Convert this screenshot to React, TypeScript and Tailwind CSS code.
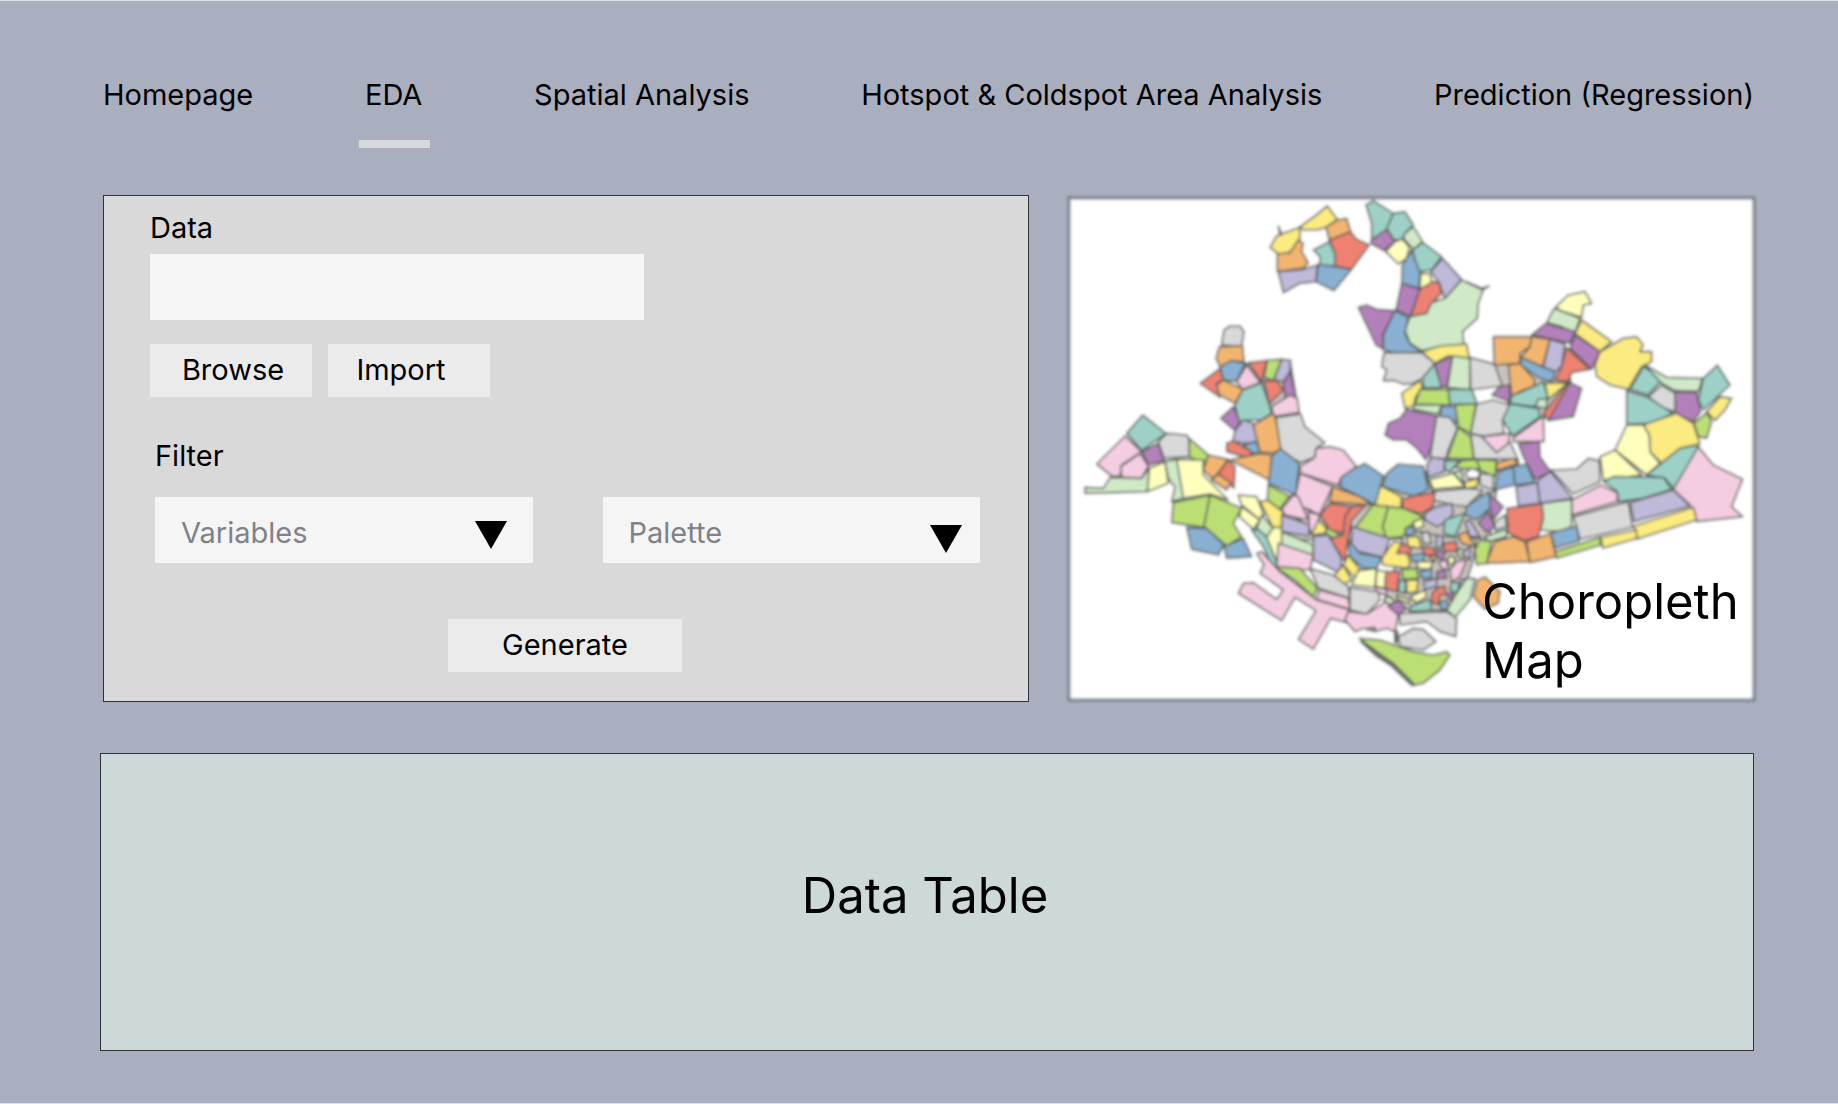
import React from "react";

const colours: Record<string, string> = {
  t: "#9dd1c7",
  l: "#ffffbd",
  v: "#bfb9da",
  r: "#ee8172",
  b: "#89b0d2",
  o: "#f2b56f",
  g: "#bbdf75",
  p: "#f5cde2",
  s: "#d9d9d9",
  u: "#b480bb",
  m: "#d0eac8",
  y: "#fbeb80",
  k: "#777c77",
  x: "#c8c2bd",
  w: "#ffffff",
};

type Sheet = { x: number; y: number; districts: string };

// Each line is a colour key followed by the outline of one district.
const sheets: Sheet[] = [
  {
    x: 1240,
    y: 190,
    districts: `y 180,110 225,78 262,48 292,88 258,112 232,120 190,120
y 90,172 110,138 135,128 180,112 180,145 160,180 135,192 115,192
o 112,192 150,188 175,150 190,160 185,185 205,218 190,235 112,245
v 115,245 190,238 232,225 228,275 180,280 130,308
b 235,222 335,238 282,302 228,275
t 220,180 268,155 285,190 285,228 240,225 240,200
o 258,112 292,90 320,85 332,125 268,150
r 268,150 332,125 350,148 388,165 335,238 285,228 285,190
k 115,108 125,132 120,136
t 378,45 400,32 460,70 440,120 395,150 395,100
u 395,150 440,118 465,155 432,182 392,160
t 460,70 495,65 520,105 495,130 487,148 462,150 440,115
m 520,110 548,155 520,178 490,145 495,130
l 437,185 465,155 487,147 508,172 500,205 475,222
b 500,205 515,180 525,210 540,235 538,295 485,280 487,225
t 548,157 605,200 575,240 540,245 525,210 518,180
v 608,205 665,268 615,328 598,280 572,245
l 542,250 570,252 578,285 555,300 540,295
u 485,280 540,298 512,378 468,360
r 540,298 578,275 598,278 605,310 575,340 560,370 512,380
m 665,270 730,300 715,340 712,385 668,425 672,462 600,470 545,482 510,460 495,420 510,380 560,370 575,338 615,325
u 355,352 380,345 410,358 465,362 428,435 430,478 408,465
b 465,362 505,382 495,430 510,462 545,485 480,492 430,480 430,435
k 680,275 725,295 748,288 728,300
s 432,488 545,488 585,520 548,565 520,580 490,583 465,572 430,572 440,540 425,530
y 545,485 600,468 680,462 688,505 625,498 585,520
u 585,522 638,498 620,590 600,590
t 548,565 583,522 605,592 552,595
m 638,498 690,505 690,600 622,592`,
  },
  {
    x: 1280,
    y: 340,
    districts: `x 62,400 230,385 310,410 440,395 650,450 630,595 20,600 20,500
s 570,52 690,85 690,135 572,150
y 365,160 420,122 428,140 405,175 402,198 375,205
g 420,148 505,148 510,195 405,192
m 402,195 485,195 475,222 400,208
t 505,148 575,148 592,192 510,192
b 485,198 530,200 530,250 480,228
g 525,195 588,192 572,280 535,260
s 590,192 640,180 690,195 668,240 672,280 610,288 572,280
u 380,208 470,228 455,320 438,360 410,325 380,300 340,300 315,285 325,250 360,235
s 470,228 510,232 532,265 505,330 498,358 450,355
g 535,262 572,290 582,360 500,358
s 572,282 612,290 650,335 690,305 715,360 640,365 583,360
p 605,290 690,280 685,310 650,338
s 440,410 450,355 715,358 715,390 650,450 620,465 460,460
v 440,375 455,352 495,358 492,395 445,412
t 495,362 540,362 510,395 495,390
g 545,362 590,358 600,388 540,385 525,380
g 590,358 650,362 645,410 600,390
o 650,370 700,355 715,370 650,392
b 655,395 700,380 705,435 645,450
b 700,380 740,372 765,428 705,435
l 448,420 520,400 555,440 460,447
m 520,398 545,392 550,430
w 555,400 575,385 600,395 595,415 565,415
y 555,425 595,415 590,440 555,448
s 600,400 640,405 640,450 600,435
s 455,455 560,445 610,450 560,500 520,495 460,480
b 320,400 355,372 430,378 445,450 400,468 308,440
r 365,480 400,468 465,458 458,500 425,522 370,505
y 290,440 308,440 365,470 362,505 285,495
b 185,405 255,370 310,408 285,495 240,470 180,440
s -12,232 62,222 75,260 135,308 108,325 105,352 62,368 0,335
p 60,380 105,352 108,325 150,320 190,330 230,380 185,410 175,435 62,400
b 0,325 58,370 48,460 40,462 -35,430 -25,350
p 60,400 158,440 118,525 80,505 12,510 48,460
p 12,512 78,505 115,530 92,560
o 158,440 240,470 275,495 150,485
g 278,495 325,500 308,560 320,595 225,565
g 325,500 370,505 430,530 385,560 370,590 320,595 308,560
v 435,520 470,500 515,490 520,520 500,545 470,560 435,540
t 555,520 525,590 490,580 495,540
b 560,500 625,455 635,500 590,540 555,525
u 630,465 670,500 640,540 630,500
u 595,550 625,515 645,560 620,578
v 555,545 570,540 600,590 570,590
s 645,545 675,525 680,560 645,572`,
  },
  {
    x: 1480,
    y: 270,
    districts: `x 45,285 120,260 265,300 275,345 200,440 100,490 85,400
l 228,110 265,75 315,65 335,100 310,105 305,142 240,122
m 222,115 300,145 285,190 240,168 200,158
u 155,195 198,160 285,185 270,220 205,205
y 305,150 395,215 360,245 285,190
u 285,195 360,245 335,298 270,235
y 345,285 360,245 430,205 470,200 490,225 480,245 515,245 515,275 485,290 445,358 390,345 350,320
o 40,200 155,200 150,230 120,250 120,280 42,285
o 155,200 210,208 188,290 122,262 150,230
v 210,208 255,222 245,290 225,305 190,290
r 260,232 330,298 275,308 265,335 225,330 245,290
b 122,262 190,292 225,305 215,335 180,325 150,305 122,285
o 85,285 120,280 165,330 160,350 130,360 95,378
u 35,375 60,350 88,345 90,395
t 160,350 190,335 205,385 160,410 90,400 95,378
y 195,340 265,338 205,388
m 165,410 175,388 200,385 200,415
r 265,338 275,350 205,452 190,430
u 270,338 305,355 280,440 205,452
t 90,402 175,415 180,440 98,498 68,450
p 98,505 190,438 192,515 100,515
u 115,522 178,515 180,560 212,605 165,628 130,560
t 490,290 550,325 505,375 450,358
m 495,285 560,322 668,325 655,365 585,362 545,340
t 712,285 750,345 670,420 655,390 670,325
y 755,385 735,420 705,452 680,425 720,380
u 585,365 650,368 662,425 640,455 585,430
s 505,380 545,345 585,370 585,425 550,415
t 440,362 500,380 578,430 520,460 440,462
g 680,428 695,455 680,505 655,500 642,460
y 490,465 590,430 640,460 660,522 600,535 545,580 510,545 508,495
l 440,465 490,465 508,495 510,545 540,580 500,615 405,540
l 360,560 405,540 485,615 370,630
t 500,615 600,535 655,525 630,610 580,655 555,625
t 370,635 400,620 550,622 575,658 490,685 415,695 412,665
p 655,530 700,585 788,628 755,710 788,740 650,755 630,705 580,658
s 212,600 290,597 325,565 358,572 360,635 280,672
v 212,605 278,685 180,700 172,632
v 108,650 172,638 180,700 115,708
p 275,690 362,645 412,668 412,695 275,735
m 185,700 275,688 275,770 240,785 180,780 190,745
s 280,740 445,695 458,772 300,808
v 450,698 580,660 630,708 462,755
y 462,768 640,712 650,750 470,808
y 362,802 468,780 472,805 368,835
g 225,845 360,802 362,825 230,865
b 212,790 290,768 298,812 225,835
r 80,715 185,702 190,745 175,800 135,812 85,790
m 15,800 80,778 80,800 25,815
o 18,880 45,815 100,800 135,815 150,875
o 140,815 212,790 228,860 150,878`,
  },
  {
    x: 1060,
    y: 190,
    districts: `x 555,520 690,510 712,640 715,665 640,680 560,600
s 485,465 492,420 510,408 540,408 552,425 545,470
o 478,470 548,468 552,515 515,515 480,530 468,505
r 420,580 480,535 490,570 470,580 480,622
b 480,530 515,512 555,520 530,575 490,570
o 470,585 490,570 550,598 525,640 478,615
p 530,575 560,525 602,578 548,598
r 565,518 620,512 605,575
g 622,510 665,508 640,572 612,562
v 665,508 692,510 690,545 670,575 642,570
u 690,545 712,635 675,620 670,580
r 612,572 650,572 670,600 628,642
t 548,600 605,578 628,645 635,670 605,690 560,690 540,710 525,645
p 635,650 690,615 712,625 718,668 640,680
v 518,755 525,722 550,690 580,700 595,755 560,760
u 482,685 520,650 540,695 525,722
o 605,690 640,670 648,690 662,775 645,788 600,788 580,705`,
  },
  {
    x: 1060,
    y: 400,
    districts: `t 200,100 248,45 318,100 245,152
p 110,192 195,108 245,155 185,195 180,230 155,228
p 182,200 240,160 265,198 245,235 185,232
u 245,155 295,130 312,182 265,195
s 295,125 320,100 380,105 388,120 388,170 312,175
g 388,115 445,165 435,190 388,172
m 75,262 130,265 150,232 245,235 268,205 262,275 75,280
l 268,205 315,185 325,250 262,275
m 315,185 350,178 372,230 370,295 335,305 345,262 325,235
l 350,178 430,180 430,225 505,300 450,282 370,295
o 430,210 445,165 505,178 470,225 455,235
r 505,180 525,200 522,265 475,220
o 455,240 475,222 512,248 500,270
b 550,135 590,125 600,160 575,160
r 500,130 520,122 575,155 568,175 500,155
o 510,180 600,160 635,165 628,240
g 340,308 450,285 432,382 335,368
g 450,285 545,325 520,370 545,410 500,438 432,380
b 380,382 440,385 492,435 475,465 395,448
b 492,440 550,415 575,470 500,475
l 535,285 590,290 612,345 600,360 545,315
l 545,320 600,360 580,388 538,350
y 600,305 625,300 668,335 672,382 640,385
m 605,345 640,385 625,415 590,385
t 575,390 595,388 622,412 655,500 640,505 610,440
l 640,382 675,382 658,505 620,412
g 625,255 688,288 660,328 622,300
p 665,328 700,285 715,290 745,360 675,345`,
  },
  {
    x: 1280,
    y: 500,
    districts: `v 5,45 90,75 85,108 5,95
m 5,95 100,135 100,165 5,145
p -5,130 100,165 90,210 -10,205
g -15,200 60,205 112,265 100,292 50,245
p -70,160 -55,155 0,215 110,300 210,330 200,368 152,355 100,448 55,418 108,332 45,292 5,362 -125,280 -110,250 -80,248 -10,298 10,270 -60,220 -48,195
p 85,35 118,45 115,65 95,105 88,82
y 115,60 140,85 135,100 95,105
g 140,80 180,105 175,125 138,100
v 100,110 145,105 185,175 180,220 100,180
r 120,45 150,10 215,20 195,50 190,100 150,90
r 215,20 258,15 215,60 205,110 195,185 150,115 190,105 195,50
v 215,80 330,115 310,172 215,150
b 205,120 240,160 305,172 290,205 250,205 210,170
y 205,165 242,210 225,235 190,195
y 160,230 190,195 215,240 190,255
l 235,212 290,205 285,262 215,255
l 290,210 318,215 315,265 287,260
s 90,205 160,225 205,260 210,295 115,265
p 118,270 205,295 210,328 110,298
p 285,260 345,275 340,290 290,278
s 210,262 295,275 300,300 260,342 210,330
p 205,335 260,342 318,305 355,345 345,395 320,385 285,395 250,385 225,395 195,360
x 370,105 420,95 480,108 530,114 590,115 580,180 555,260 510,330 380,330 315,290 345,200
y 305,175 340,125 370,130 390,185 385,205 308,195
r 318,215 358,215 352,275 315,265
r 350,160 365,130 395,145 390,160
g 365,208 410,205 415,235 370,238
t 358,240 378,245 375,280 355,275
y 380,240 415,240 410,275 380,280
l 350,285 390,300 385,310 350,295
l 390,290 435,270 440,290 410,308
m 310,300 325,288 345,305 330,315
u 325,320 355,300 378,325 355,345
t 390,320 450,298 455,330 390,335
b 375,85 400,80 405,100 380,108
l 400,65 430,55 430,80 405,88
s 425,100 445,95 455,130 430,130
y 380,110 415,110 425,145 385,140
v 470,105 490,110 485,145 468,140
r 430,140 465,145 460,165 430,165
r 490,130 530,125 530,155 495,155
o 535,105 560,95 585,140 545,130
m 535,145 558,150 550,175 535,170
v 545,160 570,140 570,180
b 390,165 435,160 430,185 400,185
o 445,170 470,165 465,185
l 410,185 460,185 450,208 415,205
p 475,185 500,180 505,210 485,205
u 470,150 495,155 490,180 470,172
l 505,170 525,170 520,195 505,190
p 510,210 530,185 560,180 540,230 515,245
b 420,215 455,205 455,235 425,235
u 470,215 495,210 500,235 470,235
v 430,245 470,235 470,260 435,268
r 455,280 475,262 495,258 500,285 480,285 475,315 458,310
t 515,245 540,250 530,280 510,270
u 500,285 520,275 515,305
b 480,305 500,300 505,325 485,330
v 540,240 560,235 555,260 540,265
m 500,330 530,280 560,235 585,235 570,300 525,352
g 585,150 600,120 635,125 620,190 590,195
o 580,290 592,240 615,230 660,275 655,310 615,328
s 358,340 500,335 530,355 528,410 480,395 440,365 360,375
s 355,410 400,385 430,388 468,425 430,450 360,440
k 344,390 354,395 350,430 344,425
s 262,385 285,382 285,392 262,390
k 242,425 300,462 350,500 405,556 395,556 330,495 290,470
g 238,415 300,420 400,455 460,465 500,455 510,465 480,510 430,550 405,555 340,490 270,440`,
  },
];

function ChoroplethMap() {
  return (
    <svg
      viewBox="1064 193 696 514"
      preserveAspectRatio="none"
      className="block h-full w-full"
      role="img"
      aria-label="Choropleth map of the harbour districts"
    >
      <defs>
        <filter id="soften" x="-2%" y="-2%" width="104%" height="104%">
          <feGaussianBlur stdDeviation="1.5" />
        </filter>
      </defs>
      <g filter="url(#soften)">
        <rect x="1069" y="198" width="685" height="502" fill="#fff" stroke="#777b88" strokeWidth="3" />
        {sheets.map((sheet, i) => (
          <g
            key={i}
            transform={`translate(${sheet.x} ${sheet.y}) scale(0.3333)`}
            stroke="#555a55"
            strokeWidth="5"
            strokeLinejoin="round"
          >
            {sheet.districts.split("\n").map((line, j) => (
              <polygon key={j} fill={colours[line[0]]} points={line.slice(2)} />
            ))}
          </g>
        ))}
      </g>
    </svg>
  );
}

const links = [
  "Homepage",
  "EDA",
  "Spatial Analysis",
  "Hotspot & Coldspot Area Analysis",
  "Prediction (Regression)",
];

function Picker({ label, arrow }: { label: string; arrow: string }) {
  return (
    <div className="relative min-w-0 flex-1">
      <select
        aria-label={label}
        className="h-[66px] w-full appearance-none bg-[#f5f5f5] px-[26px] pt-1.5 text-[#7f828a]"
      >
        <option>{label}</option>
      </select>
      <svg
        viewBox="0 0 32 28"
        className={`pointer-events-none absolute h-7 w-8 ${arrow}`}
        aria-hidden="true"
      >
        <path d="M0 0H32L16 28Z" fill="#000" />
      </svg>
    </div>
  );
}

const button = "h-[53px] bg-[#ebebeb] pb-0.5 text-center";

export default function App() {
  return (
    <div className="min-h-screen border-y border-[#dcdfe6] bg-[#a9afbf] pr-[84px] pb-[51px] pl-[100px] font-['Inter',sans-serif] text-[29px] leading-9 text-black">
      <nav className="flex justify-between pt-[76px] pl-[3px] whitespace-nowrap">
        {links.map((name) => (
          <a key={name} href="#" aria-current={name === "EDA" ? "page" : undefined} className="relative">
            {name}
            {name === "EDA" && (
              <span className="absolute top-[63px] -right-2 -left-1.5 h-2 bg-[#d9d9d9]" />
            )}
          </a>
        ))}
      </nav>

      <main>
        <div className="mt-[82px] -mr-1.5 grid grid-cols-[minmax(0,926fr)_minmax(0,696fr)] gap-[35px] pl-[3px]">
          <form
            className="flex flex-col border border-[#303238] bg-[#d9d9d9] pt-3.5 pr-12 pb-[29px] pl-[46px]"
            onSubmit={(e) => e.preventDefault()}
          >
            <label htmlFor="data">Data</label>
            <input id="data" type="text" className="mt-2 h-[66px] w-[494px] bg-[#f5f5f5] px-6" />
            <div className="mt-6 flex gap-4">
              <button type="button" className={`${button} w-[162px] pl-1`}>
                Browse
              </button>
              <button type="button" className={`${button} w-[162px] pr-4`}>
                Import
              </button>
            </div>
            <fieldset className="mt-[41px] pl-[5px]">
              <legend>Filter</legend>
              <div className="mt-[23px] flex gap-[70px]">
                <Picker label="Variables" arrow="top-6 right-[26px]" />
                <Picker label="Palette" arrow="top-7 right-[18px]" />
              </div>
            </fieldset>
            <button type="submit" className={`${button} mt-14 w-[234px] self-center`}>
              Generate
            </button>
          </form>

          <section className="relative">
            <div className="absolute inset-x-0 -top-0.5 h-[514px]">
              <ChoroplethMap />
            </div>
            <h2 className="absolute right-2 bottom-3 w-[270px] text-[49px] leading-[59px]">
              Choropleth Map
            </h2>
          </section>
        </div>

        <section className="mt-[51px] flex h-[298px] items-center justify-center border border-[#303238] bg-[#cdd8d8] pr-1 pb-3">
          <h2 className="text-[49px]">Data Table</h2>
        </section>
      </main>
    </div>
  );
}
